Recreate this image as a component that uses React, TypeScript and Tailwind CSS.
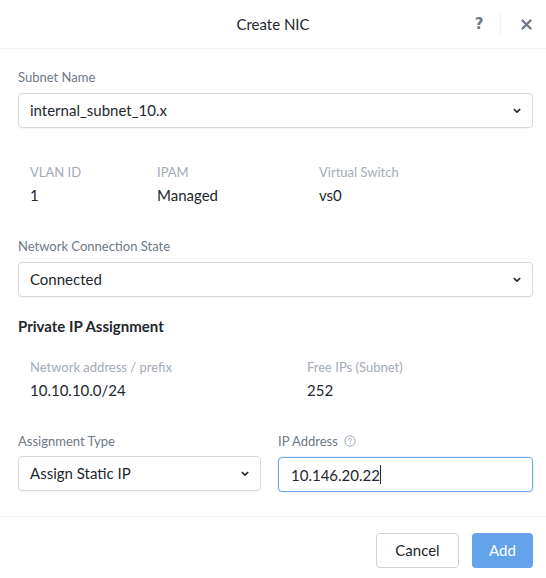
import { useState } from 'react';

const font = { fontFamily: 'Lato, "Open Sans", sans-serif' };

function Chevron() {
  return (
    <svg width="8" height="6" viewBox="0 0 8 6" fill="none">
      <path d="M1.3 1.5L4 4.2L6.7 1.5" stroke="#22272e" strokeWidth="1.7" strokeLinecap="round" strokeLinejoin="round" />
    </svg>
  );
}

function Select({ value }: { value: string }) {
  return (
    <div className="flex h-[35px] items-center justify-between rounded-[4px] border border-[#d4d9df] bg-white pl-[11px] pr-[11px] text-[15px] text-[#22272e] shadow-[0_1px_1px_rgba(0,0,0,0.04)]">
      <span>{value}</span>
      <Chevron />
    </div>
  );
}

function Label({ children }: { children: React.ReactNode }) {
  return <div className="mb-[8px] text-[13px] leading-[16px] text-[#6e7987]">{children}</div>;
}

function Info({ label, value }: { label: string; value: string }) {
  return (
    <div>
      <div className="text-[13px] leading-[16px] text-[#a3abb6]">{label}</div>
      <div className="mt-[5px] text-[15px] leading-[20px] text-[#22272e]">{value}</div>
    </div>
  );
}

export default function App() {
  const [ip, setIp] = useState('10.146.20.22');

  return (
    <div className="flex h-[578px] w-[546px] flex-col bg-white" style={font}>
      {/* Header */}
      <div className="relative flex h-[49px] items-center justify-center border-b border-[#f1f3f5]">
        <span className="text-[15px] text-[#22272e]">Create NIC</span>
        <div className="absolute right-0 top-0 flex h-full items-center">
          <span className="w-[30px] text-center font-['DejaVu_Sans',sans-serif] text-[15px] font-bold text-[#6e7987]">?</span>
          <div className="mx-[6px] h-[24px] w-px bg-[#f1f3f5]" />
          <svg className="mx-[14px]" width="11" height="11" viewBox="0 0 11 11">
            <path d="M1.5 1.5L9.5 9.5M9.5 1.5L1.5 9.5" stroke="#6e7987" strokeWidth="2.4" strokeLinecap="round" />
          </svg>
        </div>
      </div>

      {/* Body */}
      <div className="flex-1 pl-[18px] pr-[13px] pt-[20px]">
        <Label>Subnet Name</Label>
        <Select value="internal_subnet_10.x" />

        <div className="mt-[36px] grid grid-cols-[127px_162px_1fr] pl-[12px]">
          <Info label="VLAN ID" value="1" />
          <Info label="IPAM" value="Managed" />
          <Info label="Virtual Switch" value="vs0" />
        </div>

        <div className="mt-[33px]">
          <Label>Network Connection State</Label>
          <Select value="Connected" />
        </div>

        <div className="mt-[19px] text-[15px] font-bold leading-[20px] text-[#22272e]">Private IP Assignment</div>

        <div className="mt-[23px] grid grid-cols-[277px_1fr] pl-[12px]">
          <Info label="Network address / prefix" value="10.10.10.0/24" />
          <Info label="Free IPs (Subnet)" value="252" />
        </div>

        <div className="mt-[33px] grid grid-cols-[243px_1fr] gap-x-[17px]">
          <div>
            <div className="mb-[7px] text-[13px] leading-[16px] text-[#6e7987]">Assignment Type</div>
            <Select value="Assign Static IP" />
          </div>
          <div>
            <div className="mb-[8px] flex items-center gap-[6px] text-[13px] leading-[16px] text-[#6e7987]">
              IP Address
              <svg width="12" height="12" viewBox="0 0 12 12" fill="none">
                <circle cx="6" cy="6" r="5.2" stroke="#a3abb6" strokeWidth="1" />
                <path d="M4.5 4.7C4.5 3.9 5.1 3.4 6 3.4C6.9 3.4 7.5 3.9 7.5 4.6C7.5 5.5 6.2 5.6 6.2 6.6" stroke="#a3abb6" strokeWidth="1" strokeLinecap="round" />
                <circle cx="6.2" cy="8.4" r="0.6" fill="#a3abb6" />
              </svg>
            </div>
            <div className="relative">
              <input
                value={ip}
                onChange={(e) => setIp(e.target.value)}
                className="h-[35px] w-full rounded-[4px] border border-[#6ea8ea] bg-white px-[12px] text-[15px] text-[#22272e] outline-none shadow-[0_0_0_1px_rgba(110,168,234,0.15)]"
              />
              {/* text caret, as in the focused reference */}
              <span className="pointer-events-none absolute left-[102px] top-[8px] h-[19px] w-px bg-[#22272e]" />
            </div>
          </div>
        </div>
      </div>

      {/* Footer */}
      <div className="flex h-[62px] items-start justify-end gap-[13px] border-t border-[#f1f3f5] pr-[13px] pt-[16px]">
        <button className="h-[35px] w-[83px] rounded-[4px] border border-[#cdd3da] bg-white text-[15px] text-[#22272e]">Cancel</button>
        <button className="h-[35px] w-[61px] rounded-[4px] bg-[#63a3ea] text-[15px] text-white">Add</button>
      </div>
    </div>
  );
}
